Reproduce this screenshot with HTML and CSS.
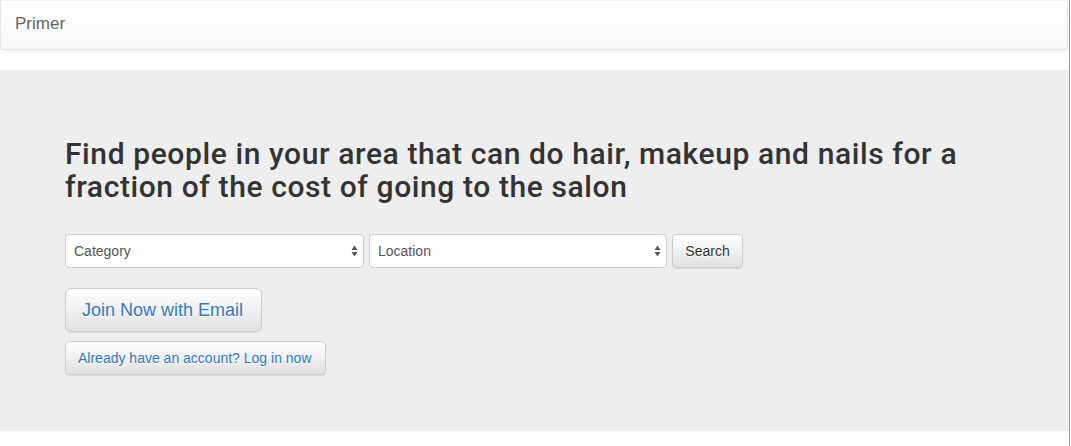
FILE: index.html
```html
<!DOCTYPE html>
<html>
<head>
<meta charset="utf-8">
<link rel="stylesheet" href="styles.css">
</head>
<body>
<div class="page">
  <nav class="navbar">
    <a class="brand" href="#">Primer</a>
  </nav>
  <section class="jumbotron">
    <div class="container">
      <h2 class="headline">Find people in your area that can do hair, makeup and nails for a fraction of the cost of going to the salon</h2>
      <form class="search-form">
        <div class="select-wrap select-category">
          <select class="select"><option>Category</option></select>
          <span class="arrows"><svg width="7" height="12" viewBox="0 0 7 12"><path d="M3.5 0.5 L6.5 5 L0.5 5 Z" fill="#555"/><path d="M0.5 7 L6.5 7 L3.5 11.5 Z" fill="#555"/></svg></span>
        </div>
        <div class="select-wrap select-location">
          <select class="select"><option>Location</option></select>
          <span class="arrows"><svg width="7" height="12" viewBox="0 0 7 12"><path d="M3.5 0.5 L6.5 5 L0.5 5 Z" fill="#555"/><path d="M0.5 7 L6.5 7 L3.5 11.5 Z" fill="#555"/></svg></span>
        </div>
        <button type="button" class="btn btn-search">Search</button>
      </form>
      <div class="actions">
        <a class="btn btn-lg btn-link-blue" href="#">Join Now with Email</a>
        <a class="btn btn-link-blue btn-login" href="#">Already have an account? Log in now</a>
      </div>
    </div>
  </section>
</div>
</body>
</html>
```

FILE: styles.css
```css
html, body {
  margin: 0;
  padding: 0;
  background: #fff;
}
body {
  font-family: "Liberation Sans", Arial, sans-serif;
  font-size: 14px;
  line-height: 1.42857;
  color: #333;
}
.page {
  width: 1069px;
  min-height: 446px;
  border-right: 1px solid #9b9b9b;
  box-sizing: content-box;
}
.navbar {
  height: 48px;
  width: 1066px;
  border: 1px solid #e4e4e4;
  border-top-color: #f0f0f0;
  border-radius: 0 0 4px 4px;
  background: linear-gradient(to bottom, #fff 0%, #f8f8f8 100%);
  box-shadow: inset 0 1px 0 rgba(255,255,255,.15), 0 1px 5px rgba(0,0,0,.075);
  margin-bottom: 20px;
  display: flex;
  align-items: center;
}
.brand {
  padding-left: 14px;
  font-size: 17px;
  color: #666;
  text-decoration: none;
  text-shadow: 0 1px 0 rgba(255,255,255,.25);
  margin-top: -2px;
}
.jumbotron {
  background: #eee;
  padding: 48px 0 56px;
  height: 257px;
}
.container {
  padding-left: 65px;
}
.headline {
  margin: 19px 0 31px;
  font-family: Roboto, "Liberation Sans", Arial, sans-serif;
  font-size: 30px;
  font-weight: 500;
  line-height: 33px;
  letter-spacing: 0.6px;
  color: #333;
  width: 960px;
}
.search-form {
  display: flex;
  gap: 5px;
  align-items: center;
  margin: 0 0 20px;
}
.select-wrap {
  position: relative;
  height: 34px;
}
.select-category { width: 299px; }
.select-location { width: 298px; }
.select {
  appearance: none;
  -webkit-appearance: none;
  width: 100%;
  height: 34px;
  border: 1px solid #ccc;
  border-radius: 4px;
  background: #fff;
  font-family: "Liberation Sans", Arial, sans-serif;
  font-size: 14px;
  color: #555;
  padding: 0 8px;
  margin: 0;
  box-sizing: border-box;
}
.arrows {
  position: absolute;
  right: 6px;
  top: 11px;
  width: 7px;
  height: 12px;
  display: block;
  pointer-events: none;
}
.arrows svg { display: block; }
.btn {
  display: inline-block;
  box-sizing: border-box;
  border: 1px solid #ccc;
  border-radius: 4px;
  background: linear-gradient(to bottom, #fff 0%, #e0e0e0 100%);
  box-shadow: inset 0 1px 0 rgba(255,255,255,.15), 0 1px 1px rgba(0,0,0,.075);
  text-shadow: 0 1px 0 #fff;
  font-family: "Liberation Sans", Arial, sans-serif;
  font-size: 14px;
  line-height: 20px;
  padding: 6px 12px;
  text-decoration: none;
  color: #333;
}
.btn-search {
  height: 34px;
  width: 71px;
  padding: 0;
  cursor: pointer;
}
.actions {
  display: flex;
  flex-direction: column;
  align-items: flex-start;
  gap: 9px;
}
.btn-lg {
  font-size: 18px;
  line-height: 24px;
  padding: 9px 16px;
  border-radius: 6px;
  height: 44px;
  width: 197px;
}
.btn-link-blue {
  color: #337ab7;
}
.btn-login {
  font-size: 14px;
  height: 34px;
  width: 261px;
  padding: 6px 12px;
  white-space: nowrap;
}
```
